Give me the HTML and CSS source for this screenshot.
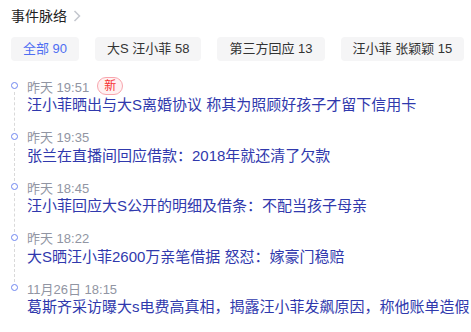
FILE: index.html
```html
<!DOCTYPE html>
<html lang="zh">
<head>
    <meta charset="UTF-8">
    <title>事件脉络</title>
    <link rel="stylesheet" href="styles.css">
</head>
<body>
    <div class="panel">
        <div class="head">
            <span class="head-title">事件脉络</span>
            <svg class="chev" width="8" height="12" viewBox="0 0 8 12"><path d="M1.5 1 L6.5 6 L1.5 11" fill="none" stroke="#c4c7ce" stroke-width="1.5"/></svg>
        </div>

        <div class="tabs">
            <span class="tab active">全部 90</span>
            <span class="tab">大S 汪小菲 58</span>
            <span class="tab">第三方回应 13</span>
            <span class="tab">汪小菲 张颖颖 15</span>
        </div>

        <ul class="timeline">
            <li class="item">
                <div class="time">昨天 19:51 <span class="badge">新</span></div>
                <a class="title">汪小菲晒出与大S离婚协议 称其为照顾好孩子才留下信用卡</a>
            </li>
            <li class="item">
                <div class="time">昨天 19:35</div>
                <a class="title">张兰在直播间回应借款：2018年就还清了欠款</a>
            </li>
            <li class="item">
                <div class="time">昨天 18:45</div>
                <a class="title">汪小菲回应大S公开的明细及借条：不配当孩子母亲</a>
            </li>
            <li class="item">
                <div class="time">昨天 18:22</div>
                <a class="title">大S晒汪小菲2600万亲笔借据 怒怼：嫁豪门稳赔</a>
            </li>
            <li class="item">
                <div class="time">11月26日 18:15</div>
                <a class="title">葛斯齐采访曝大s电费高真相，揭露汪小菲发飙原因，称他账单造假</a>
            </li>
        </ul>
    </div>
</body>
</html>
```

FILE: styles.css
```css
body {
    margin: 0;
    background: #fff;
    font-family: "Liberation Sans", "Noto Sans CJK SC", sans-serif;
}

.panel {
    padding: 6px 11px 0 11px;
}

.head {
    display: flex;
    align-items: center;
    height: 20px;
}

.head-title {
    font-size: 14px;
    color: #222;
    line-height: 20px;
}

.chev {
    margin-left: 6px;
}

.tabs {
    display: flex;
    gap: 16px;
    margin-top: 11px;
}

.tab {
    background: #f5f5f6;
    border-radius: 4px;
    height: 24px;
    line-height: 24px;
    padding: 0 12px;
    font-size: 13px;
    color: #333;
    white-space: nowrap;
}

.tab.active {
    color: #4e6ef2;
}

.timeline {
    list-style: none;
    margin: 16px 0 0 0;
    padding: 0;
}

.item {
    position: relative;
    padding-left: 16px;
    padding-bottom: 12.6px;
}

.item::after {
    content: "";
    position: absolute;
    left: 3px;
    top: 15px;
    bottom: -3px;
    border-left: 1px dashed #d9d9d9;
}

.item:last-child::after {
    display: none;
}

.time {
    position: relative;
    display: flex;
    align-items: center;
    height: 18px;
    font-size: 13px;
    color: #9195a3;
}

.time::before {
    content: "";
    position: absolute;
    left: -16px;
    top: 5px;
    width: 5px;
    height: 5px;
    border: 1.5px solid #6f86f0;
    border-radius: 50%;
    background: #fff;
}

.badge {
    display: inline-block;
    margin-left: 8px;
    height: 16px;
    line-height: 16px;
    padding: 0 6px;
    font-size: 12px;
    color: #f73131;
    background: #fff1f2;
    border: 1px solid #f8a5ad;
    border-radius: 9px;
}

.title {
    display: block;
    font-size: 15px;
    line-height: 20px;
    color: #3039ad;
    white-space: nowrap;
}
```
